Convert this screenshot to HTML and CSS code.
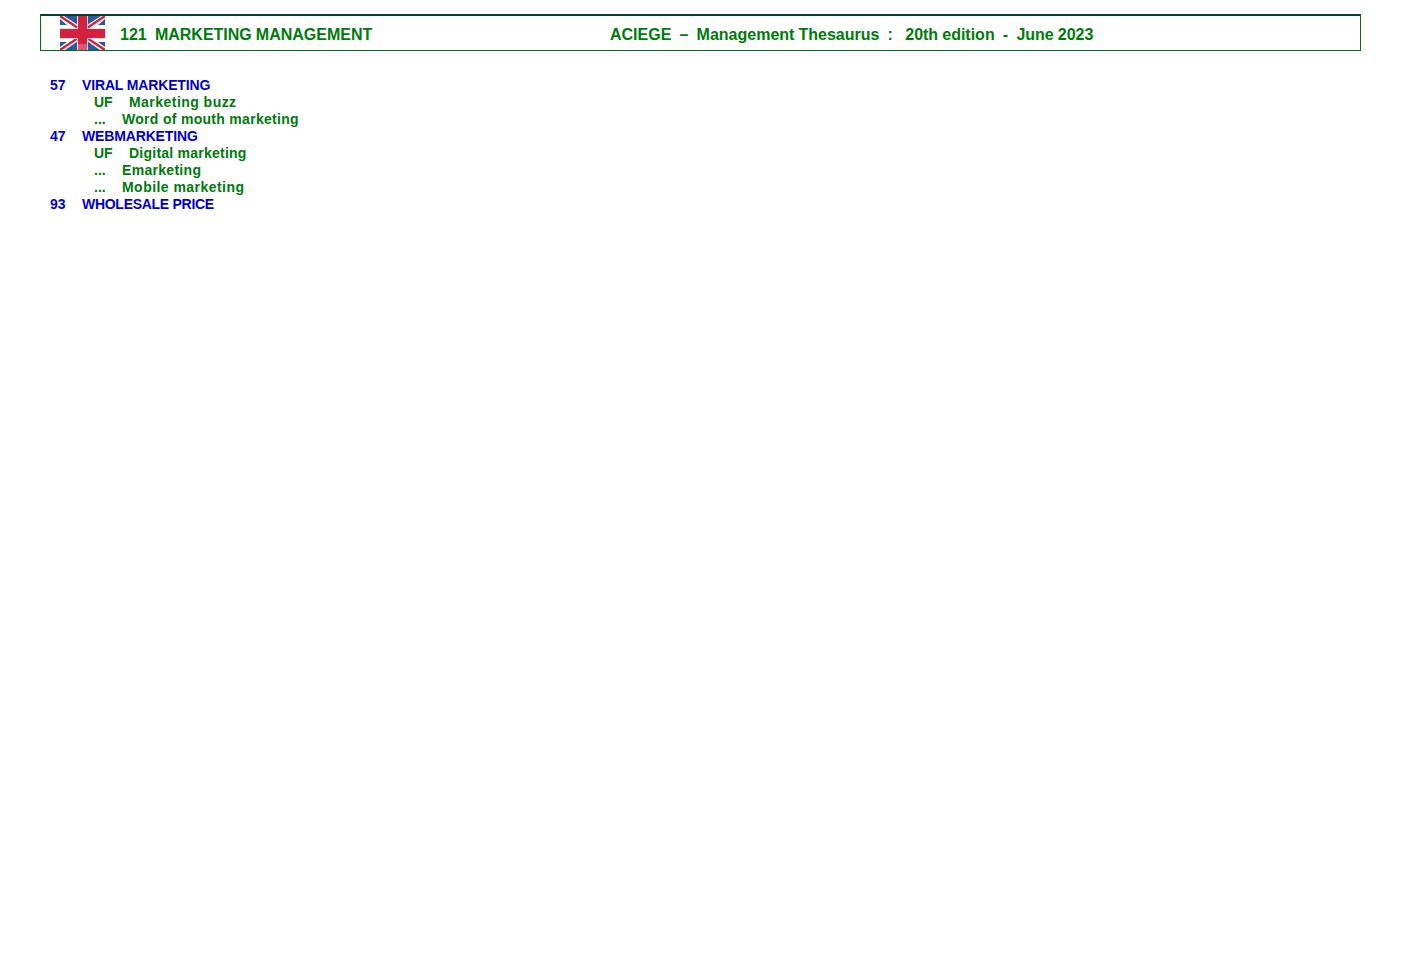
FILE: index.html
```html
<!DOCTYPE html>
<html lang="en">
<head>
<meta charset="utf-8">
<title>121 Marketing Management</title>
<link rel="stylesheet" href="styles.css">
</head>
<body>
<header class="banner">
  <svg class="flag" viewBox="0 0 45 34" preserveAspectRatio="none" aria-hidden="true">
    <rect width="45" height="34" fill="#fff"/>
    <path d="M4 0H18V9ZM41 0H27V9ZM5 34H18V25ZM40 34H27V25ZM0 3V9H7ZM45 3V9H38ZM0 31V26H7ZM45 31V26H38Z" fill="#2a5a9e"/>
    <path d="M0 0L18 12M45 0L27 12M0 34L18 22M45 34L27 22" stroke="#d5213f" stroke-width="2.4"/>
    <path d="M22.5 0V34M0 17.5H45" stroke="#f6dfe3" stroke-width="11"/>
    <path d="M22.5 0V34M0 17.5H45" stroke="#d5213f" stroke-width="9"/>
    <rect class="flag-sheen" x="18" y="28" width="9" height="6"/>
  </svg>
  <h1 class="title title-left">121  MARKETING MANAGEMENT</h1>
  <p class="title title-right">ACIEGE  –  Management Thesaurus  :   20th edition  -  June 2023</p>
</header>
<main class="list">
  <div class="term"><span class="num">57</span><span class="label">VIRAL MARKETING</span></div>
  <div class="rel"><span class="uf">UF</span><span class="label label-wide">Marketing buzz</span></div>
  <div class="rel"><span class="dots">...</span><span class="label">Word of mouth marketing</span></div>
  <div class="term"><span class="num">47</span><span class="label">WEBMARKETING</span></div>
  <div class="rel"><span class="uf">UF</span><span class="label label-snug">Digital marketing</span></div>
  <div class="rel"><span class="dots">...</span><span class="label">Emarketing</span></div>
  <div class="rel"><span class="dots">...</span><span class="label label-wide">Mobile marketing</span></div>
  <div class="term"><span class="num">93</span><span class="label label-tight">WHOLESALE PRICE</span></div>
</main>
</body>
</html>
```
FILE: styles.css
```css
html, body {
  margin: 0;
  padding: 0;
  background: #fff;
}
body {
  font-family: "Liberation Sans", Arial, sans-serif;
  font-weight: 700;
}
.banner {
  box-sizing: border-box;
  width: 1321px;
  height: 37px;
  margin: 14px 0 0 40px;
  padding-left: 19px;
  display: flex;
  align-items: flex-start;
  border: 1px solid #0a6a1a;
  border-top: 2px solid #063f35;
}
.flag {
  width: 45px;
  height: 34px;
  flex: none;
  filter: blur(0.35px);
}
.flag-sheen {
  fill: #fff;
  opacity: 0.25;
}
.title {
  margin: 10px 0 0;
  font-size: 16px;
  line-height: 18px;
  font-weight: 700;
  color: #007a0c;
  white-space: pre;
  word-spacing: -0.35px;
}
.title-left {
  width: 490px;
  margin-left: 15px;
  flex: none;
}
.list {
  margin: 26px 0 0 50px;
  font-size: 14px;
  line-height: 17px;
}
.term {
  display: flex;
  color: #0000d0;
}
.term .label {
  letter-spacing: -0.15px;
}
.term .label-tight {
  letter-spacing: -0.28px;
}
.num {
  width: 32px;
}
.rel {
  display: flex;
  padding-left: 44px;
  color: #007a0c;
}
.rel .label {
  letter-spacing: 0.3px;
}
.rel .label-wide {
  letter-spacing: 0.46px;
}
.rel .label-snug {
  letter-spacing: 0.24px;
}
.uf {
  width: 35px;
}
.dots {
  width: 28px;
}
```
